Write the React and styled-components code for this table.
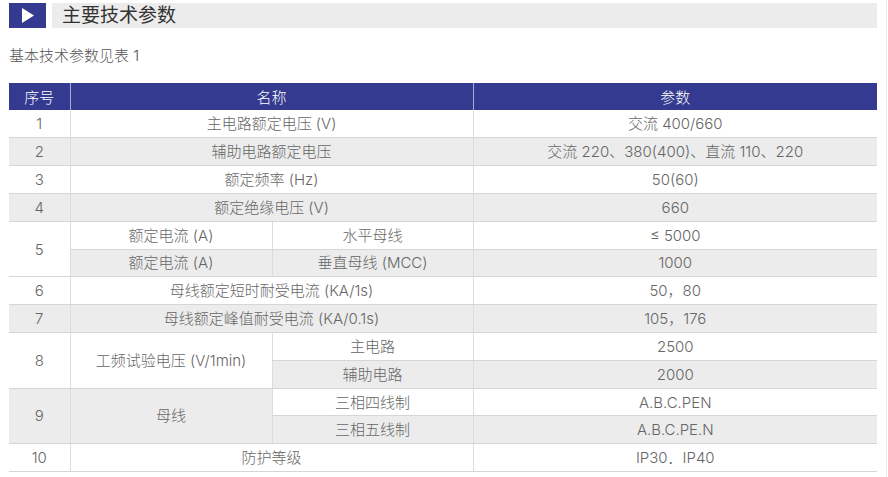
import React from 'react';
import styled, { createGlobalStyle } from 'styled-components';

const GlobalStyle = createGlobalStyle`
    body {
        margin: 0;
        background: #fff;
        font-family: "Inter", "Noto Sans CJK SC", sans-serif;
    }
`;

const Page = styled.div`
    width: 877px;
    min-height: 477px;
    padding-left: 9px;
    border-right: 1px solid #e8e8e8;
`;

const TitleBar = styled.div`
    display: flex;
    gap: 6px;
    height: 25px;
    padding-top: 3px;
    width: 868px;
`;

const TitleIcon = styled.div`
    width: 37px;
    flex: none;
    background: #333a8f;
    display: flex;
    align-items: center;
    justify-content: center;
`;

const TitleText = styled.div`
    flex: 1;
    background: #ececec;
    color: #333;
    font-size: 19px;
    line-height: 25px;
    padding-left: 10px;
`;

const Intro = styled.p`
    margin: 0;
    height: 55px;
    line-height: 55px;
    font-size: 15px;
    font-weight: 300;
    color: #555;
`;

const Table = styled.table`
    width: 868px;
    table-layout: fixed;
    border-collapse: collapse;
    font-size: 15px;
    font-weight: 300;
    color: #666;
`;

const HeadCell = styled.th`
    height: 27px;
    padding: 0;
    background: #333a8f;
    color: #fff;
    font-weight: 300;
    text-align: center;
    border-left: 1px solid #a8abd3;
    &:first-child {
        border-left: none;
    }
`;

const Row = styled.tr`
    height: 27.82px;
`;

const Cell = styled.td`
    padding: 0;
    text-align: center;
    background: ${(p) => (p.$shade ? '#ececec' : '#fff')};
    border-bottom: 1px solid #d6d6d6;
    border-left: ${(p) => (p.$first ? 'none' : '1px solid #dcdcdc')};
    line-height: 1;
`;

const rows = [
    { no: '1', name: '主电路额定电压 (V)', value: '交流 400/660' },
    { no: '2', name: '辅助电路额定电压', value: '交流 220、380(400)、直流 110、220', shade: true },
    { no: '3', name: '额定频率 (Hz)', value: '50(60)' },
    { no: '4', name: '额定绝缘电压 (V)', value: '660', shade: true },
];

export default function App() {
    return (
        <Page>
            <GlobalStyle />
            <TitleBar>
                <TitleIcon>
                    <svg width="12" height="15" viewBox="0 0 12 15">
                        <polygon points="0,0 12,7.5 0,15" fill="#fff" />
                    </svg>
                </TitleIcon>
                <TitleText>主要技术参数</TitleText>
            </TitleBar>
            <Intro>基本技术参数见表 1</Intro>
            <Table>
                <colgroup>
                    <col style={{ width: 61 }} />
                    <col style={{ width: 202 }} />
                    <col style={{ width: 201 }} />
                    <col style={{ width: 404 }} />
                </colgroup>
                <thead>
                    <tr>
                        <HeadCell>序号</HeadCell>
                        <HeadCell colSpan={2}>名称</HeadCell>
                        <HeadCell>参数</HeadCell>
                    </tr>
                </thead>
                <tbody>
                    {rows.map((r) => (
                        <Row key={r.no}>
                            <Cell $first $shade={r.shade}>{r.no}</Cell>
                            <Cell colSpan={2} $shade={r.shade}>{r.name}</Cell>
                            <Cell $shade={r.shade}>{r.value}</Cell>
                        </Row>
                    ))}
                    <Row>
                        <Cell $first rowSpan={2}>5</Cell>
                        <Cell>额定电流 (A)</Cell>
                        <Cell>水平母线</Cell>
                        <Cell>≤ 5000</Cell>
                    </Row>
                    <Row>
                        <Cell $shade>额定电流 (A)</Cell>
                        <Cell $shade>垂直母线 (MCC)</Cell>
                        <Cell $shade>1000</Cell>
                    </Row>
                    <Row>
                        <Cell $first>6</Cell>
                        <Cell colSpan={2}>母线额定短时耐受电流 (KA/1s)</Cell>
                        <Cell>50，80</Cell>
                    </Row>
                    <Row>
                        <Cell $first $shade>7</Cell>
                        <Cell colSpan={2} $shade>母线额定峰值耐受电流 (KA/0.1s)</Cell>
                        <Cell $shade>105，176</Cell>
                    </Row>
                    <Row>
                        <Cell $first rowSpan={2}>8</Cell>
                        <Cell rowSpan={2}>工频试验电压 (V/1min)</Cell>
                        <Cell>主电路</Cell>
                        <Cell>2500</Cell>
                    </Row>
                    <Row>
                        <Cell $shade>辅助电路</Cell>
                        <Cell $shade>2000</Cell>
                    </Row>
                    <Row>
                        <Cell $first $shade rowSpan={2}>9</Cell>
                        <Cell $shade rowSpan={2}>母线</Cell>
                        <Cell>三相四线制</Cell>
                        <Cell>A.B.C.PEN</Cell>
                    </Row>
                    <Row>
                        <Cell $shade>三相五线制</Cell>
                        <Cell $shade>A.B.C.PE.N</Cell>
                    </Row>
                    <Row>
                        <Cell $first>10</Cell>
                        <Cell colSpan={2}>防护等级</Cell>
                        <Cell>IP30．IP40</Cell>
                    </Row>
                </tbody>
            </Table>
        </Page>
    );
}
